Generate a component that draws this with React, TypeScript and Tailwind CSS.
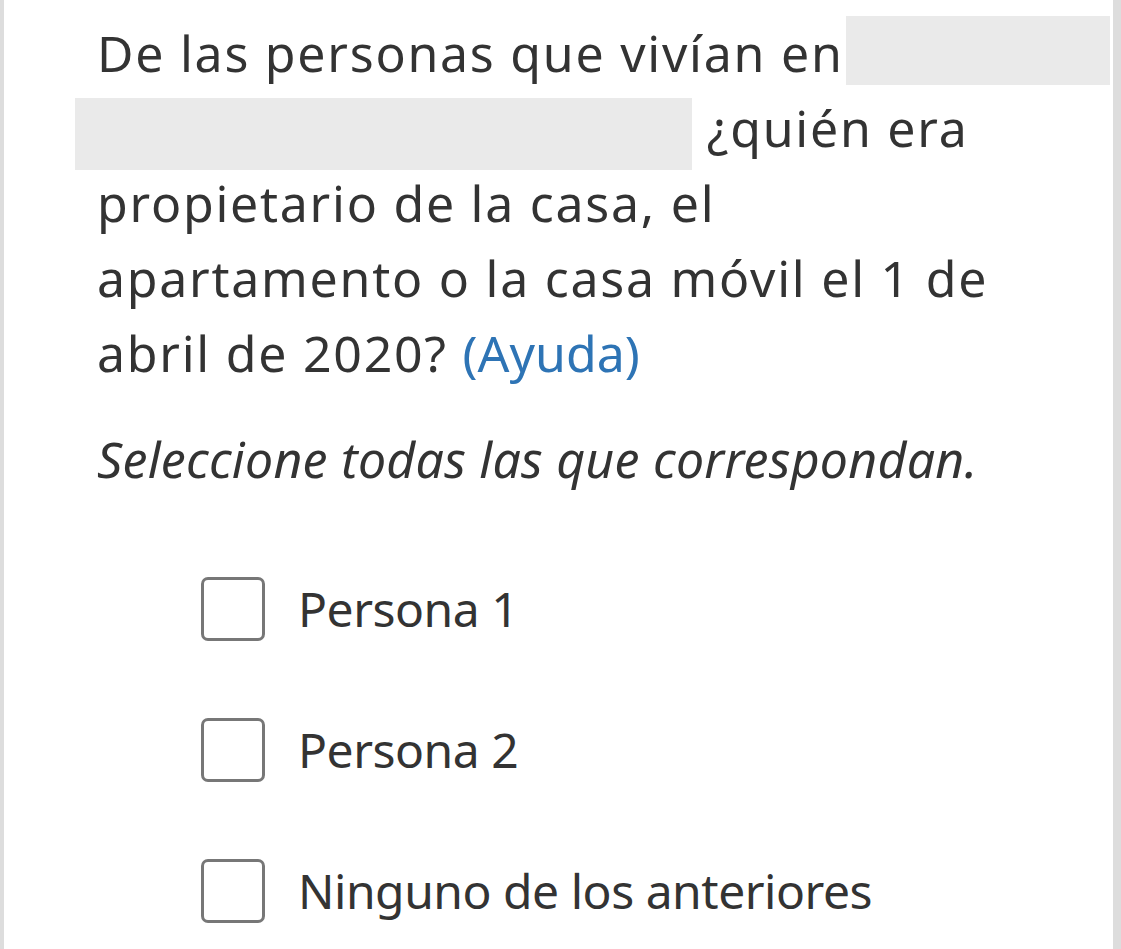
import React from 'react';

const options = ['Persona 1', 'Persona 2', 'Ninguno de los anteriores'];

export default function App() {
  return (
    <div className="flex min-h-screen bg-white text-[#333333]" style={{ fontFamily: '"Noto Sans", "Open Sans", sans-serif' }}>
      <div className="w-[4px] shrink-0 bg-[#dddddd]" />

      <main className="flex-1 pt-[16px]">
        {/* question, one div per visual line so the redaction boxes don't push lines */}
        <h1 className="whitespace-nowrap pl-[93px] text-[50px] font-normal leading-[75px] tracking-[0.035em]">
          <div className="h-[75px]">
            De las personas que vivían en
            <span className="ml-[2px] inline-block h-[69px] w-[264px] align-top bg-[#eaeaea]" />
          </div>
          <div className="h-[75px]">
            <span className="ml-[-22px] inline-block h-[72px] w-[617px] align-[-23px] bg-[#eaeaea]" />
            {' '}¿quién era
          </div>
          <div className="h-[75px]">propietario de la casa, el</div>
          <div className="h-[75px]">apartamento o la casa móvil el 1 de</div>
          <div className="h-[75px]">
            abril de 2020? <a className="cursor-pointer text-[#2e74b5] tracking-normal">(Ayuda)</a>
          </div>
        </h1>

        <p className="mt-[33px] pl-[93px] text-[50px] italic leading-[70px] tracking-[0.005em]">
          Seleccione todas las que correspondan.
        </p>

        <ul className="mt-[83px] flex flex-col gap-[77px] pl-[197px]">
          {options.map((label) => (
            <li key={label} className="flex items-center gap-[33px]">
              <span className="h-[64px] w-[64px] shrink-0 rounded-[7px] border-[3px] border-[#777777] bg-white" />
              <span className="text-[48px] leading-[64px] tracking-[-0.01em]">{label}</span>
            </li>
          ))}
        </ul>
      </main>

      <div className="w-[8px] shrink-0 bg-[#dddddd]" />
    </div>
  );
}
